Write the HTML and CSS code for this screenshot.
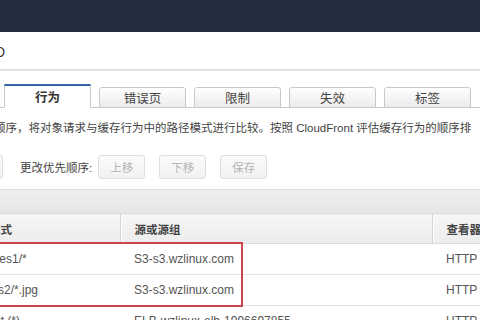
FILE: index.html
```html
<!DOCTYPE html>
<html lang="zh">
<head>
<meta charset="utf-8">
<link rel="stylesheet" href="styles.css">
</head>
<body>
<div class="topbar"></div>
<div class="titlebar"><span class="title">ID</span></div>
<div class="tabs">
  <div class="tab active">行为</div>
  <div class="tab">错误页</div>
  <div class="tab">限制</div>
  <div class="tab">失效</div>
  <div class="tab">标签</div>
</div>
<p class="intro">顺序，将对象请求与缓存行为中的路径模式进行比较。按照 CloudFront 评估缓存行为的顺序排</p>
<div class="actions">
  <button class="btn cut">编辑</button>
  <span class="label">更改优先顺序:</span>
  <button class="btn">上移</button>
  <button class="btn">下移</button>
  <button class="btn">保存</button>
</div>
<div class="grid-wrap">
  <div class="band"></div>
  <table class="grid">
    <colgroup><col class="c1"><col class="c2"><col class="c3"></colgroup>
    <thead>
      <tr><th>路径模式</th><th>源或源组</th><th>查看器协议策略</th></tr>
    </thead>
    <tbody>
      <tr><td>r/images1/*</td><td>S3-s3.wzlinux.com</td><td>HTTP</td></tr>
      <tr><td>ab/pics2/*.jpg</td><td>S3-s3.wzlinux.com</td><td>HTTP</td></tr>
      <tr><td>Default (*)</td><td>ELB-wzlinux-elb-1996697855</td><td>HTTP</td></tr>
    </tbody>
  </table>
  <div class="highlight"></div>
</div>
</body>
</html>
```
FILE: styles.css
```css
html, body {
  margin: 0;
  padding: 0;
  width: 480px;
  height: 320px;
  overflow: hidden;
  background: #fff;
  font-family: "Liberation Sans", "Noto Sans CJK SC", sans-serif;
  font-size: 11.5px;
  color: #444;
}

.topbar {
  height: 32px;
  background: #232d3d;
}

.titlebar {
  height: 37px;
  border-bottom: 2px solid #e1e1e1;
  display: flex;
  align-items: center;
}

.title {
  font-size: 14px;
  color: #333;
  margin-left: -9px;
  margin-top: 2px;
}

.tabs {
  display: flex;
  align-items: flex-end;
  gap: 8px;
  padding: 13px 0 0 4px;
  border-bottom: 1px solid #c9c9c9;
  height: 23px;
}

.tab {
  box-sizing: border-box;
  width: 87px;
  height: 21px;
  margin-bottom: -1px;
  border: 1px solid #c8c8c8;
  border-radius: 3px 3px 0 0;
  background: linear-gradient(#ffffff, #ebebeb);
  display: flex;
  align-items: center;
  justify-content: center;
  font-size: 12.5px;
  color: #444;
  flex-shrink: 0;
}

.tab.active {
  height: 24px;
  background: #fff;
  border-top: 2px solid #3467a3;
  border-bottom: 1px solid #fff;
  border-radius: 0;
  font-weight: bold;
  color: #333;
}

.intro {
  margin: 12px 0 0 -6px;
  line-height: 16px;
  white-space: nowrap;
  color: #444;
}

.actions {
  display: flex;
  align-items: center;
  margin-top: 19px;
  height: 24px;
}

.btn {
  box-sizing: border-box;
  width: 47px;
  height: 24px;
  margin: 0 14px 0 0;
  padding: 0;
  border: 1px solid #dedede;
  border-radius: 3px;
  background: linear-gradient(#fbfbfb, #f1f1f1);
  color: #b3b3b3;
  font-family: inherit;
  font-size: 11.5px;
  flex-shrink: 0;
}

.btn.cut {
  width: 40px;
  margin-left: -37px;
  margin-right: 17px;
}

.label {
  margin-right: 6px;
  color: #444;
  white-space: nowrap;
}

.grid-wrap {
  position: relative;
  margin-top: 10px;
  margin-left: -48px;
  width: 620px;
}

.band {
  height: 23px;
  border-top: 1px solid #dcdcdc;
  background: linear-gradient(#efefef, #e6e6e6);
}

.grid {
  width: 620px;
  border-collapse: collapse;
  table-layout: fixed;
}

.c1 { width: 168px; }
.c2 { width: 312px; }
.c3 { width: 140px; }

.grid th {
  height: 29px;
  padding: 0 0 0 14px;
  text-align: left;
  font-weight: bold;
  color: #444;
  background: linear-gradient(#f6f6f6, #ececec);
  border-top: 1px solid #d9d9d9;
  border-bottom: 1px solid #dcdcdc;
  border-right: 1px solid #d6d6d6;
  box-shadow: inset 1px 0 0 #fbfbfb;
  white-space: nowrap;
  overflow: hidden;
}

.grid td {
  height: 31px;
  box-sizing: border-box;
  padding: 8px 0 0 14px;
  vertical-align: top;
  border-bottom: 1px solid #e2e2e2;
  color: #555;
  font-size: 12px;
  white-space: nowrap;
  overflow: hidden;
}

.highlight {
  position: absolute;
  left: 30px;
  top: 53px;
  width: 261px;
  height: 65px;
  box-sizing: border-box;
  border: 2px solid #c9454a;
}
```
